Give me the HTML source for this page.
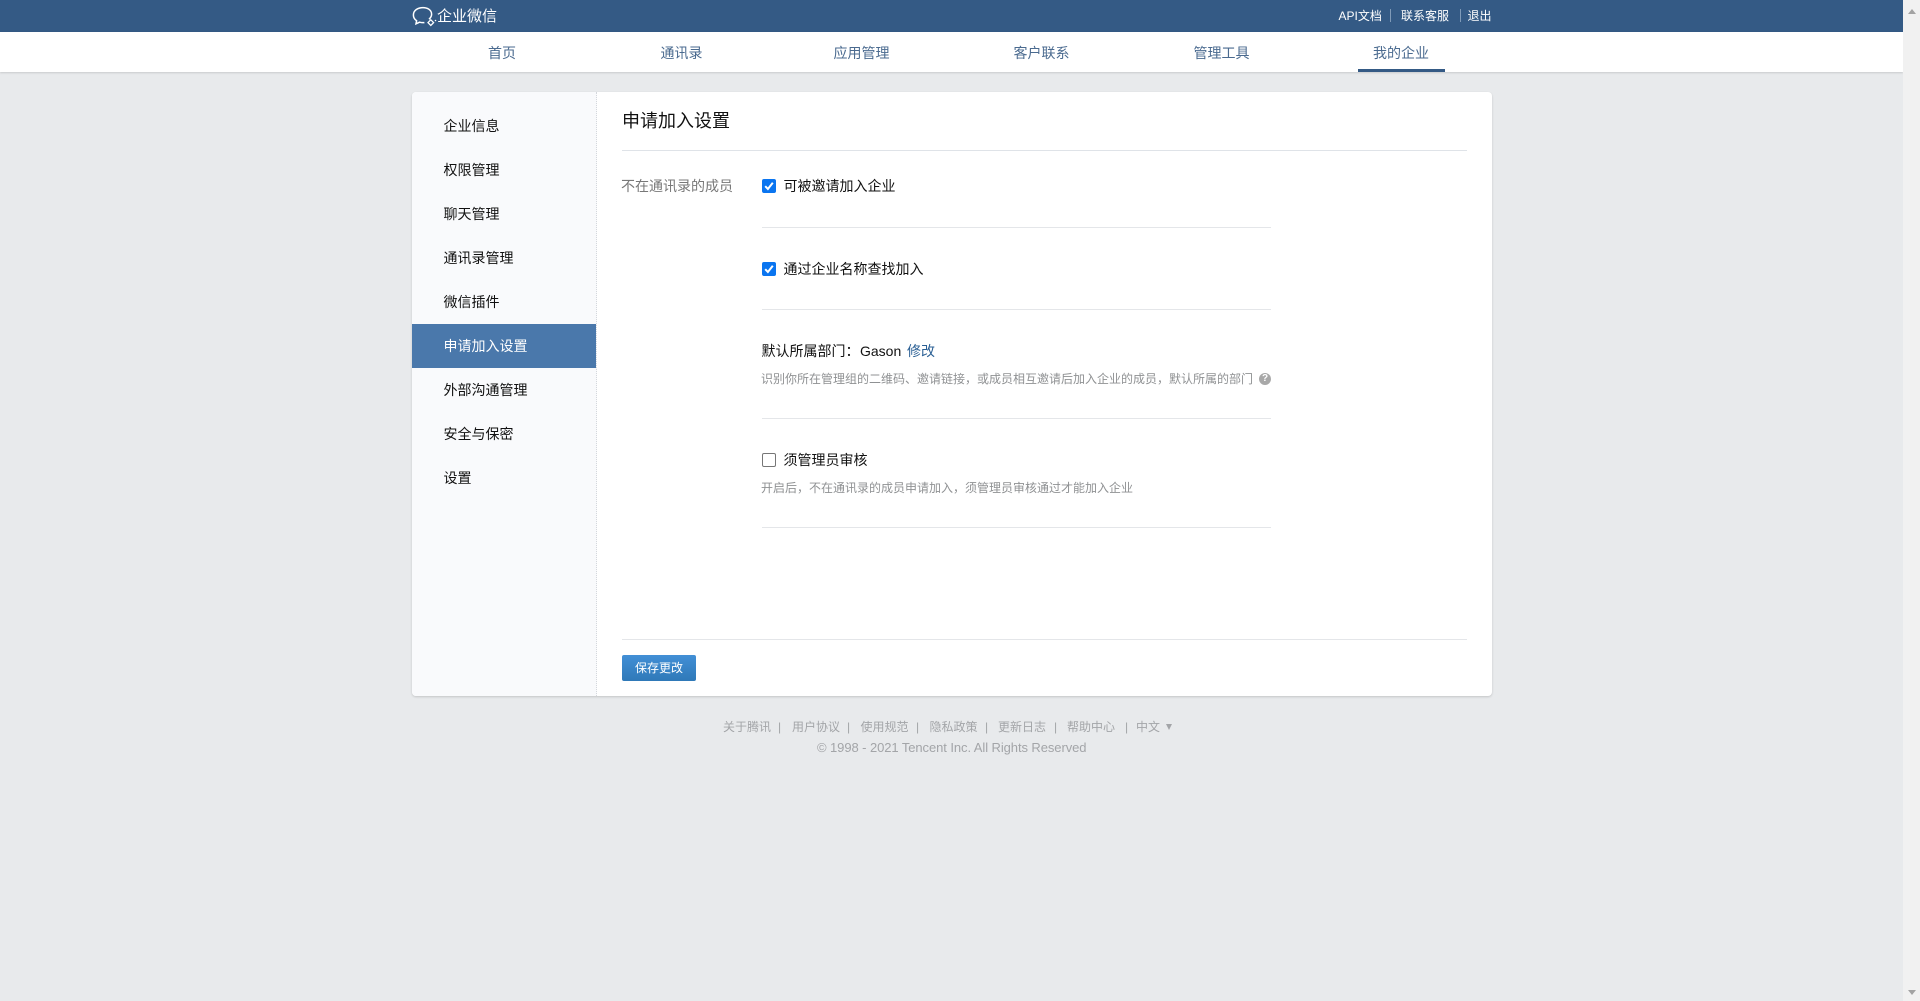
<!DOCTYPE html>
<html lang="zh-CN">
<head>
<meta charset="utf-8">
<title>申请加入设置</title>
<style>
html,body{margin:0;padding:0;width:1920px;height:1001px;overflow:hidden;background:#e8eaec;font-family:"Liberation Sans","Noto Sans CJK SC",sans-serif;color:#000}
*{box-sizing:border-box}
.a{position:absolute;white-space:nowrap;line-height:20px;height:20px}
.b{position:absolute}
.nav{width:180px;text-align:center;font-size:14px;color:#4a6a8f;top:42.5px}
.side{left:443.5px;font-size:14px;color:#111}
.line{position:absolute;left:762px;width:509px;height:1px;background:#e4e6e9}
.ck{position:absolute;left:762px;width:14px;height:14px;border-radius:2px;background:#0a75f0}
.ft{font-size:12px;color:#a3a5a8;top:717px}
.tp{font-size:12px;color:#fff;top:6px}
.sp{position:absolute;top:9px;width:1px;height:13px;background:#7f9ab8}
</style>
</head>
<body>
<div class="b" style="left:0;top:0;width:1903px;height:32px;background:#345a85"></div>
<svg class="b" style="left:410px;top:5px" width="28" height="22" viewBox="0 0 28 22" fill="none" stroke="#fff" stroke-width="1.5"><path d="M19 14.2C20.6 12.8 21.6 11 21.6 9.2C21.6 5 17.5 2.6 13 2.6C8 2.6 3.4 5.2 3.4 10C3.4 12.6 4.6 14.4 6.6 15.7L6 18.8L9.6 17.2C11 17.6 12.6 17.8 14.4 17.6"/><path d="M20.8 14.8L23.6 17.6L20.8 20.4L18 17.6Z" stroke-width="1.3"/><circle cx="25.5" cy="15.5" r=".8" fill="#fff" stroke="none"/></svg>
<div class="a" style="left:437px;top:7px;font-size:15px;color:#fff">企业微信</div>
<div class="a tp" style="left:1338.5px">API文档</div><div class="sp" style="left:1390px"></div>
<div class="a tp" style="left:1401px">联系客服</div><div class="sp" style="left:1460px"></div>
<div class="a tp" style="left:1467.5px">退出</div>

<div class="b" style="left:0;top:32px;width:1903px;height:40px;background:#fff;box-shadow:0 1px 2px rgba(0,0,0,.14)"></div>
<div class="a nav" style="left:412px">首页</div>
<div class="a nav" style="left:591.5px">通讯录</div>
<div class="a nav" style="left:771.5px">应用管理</div>
<div class="a nav" style="left:951.5px">客户联系</div>
<div class="a nav" style="left:1131.5px">管理工具</div>
<div class="a nav" style="left:1311px">我的企业</div>
<div class="b" style="left:1358px;top:69px;width:87px;height:3px;background:#345a85"></div>

<div class="b" style="left:412px;top:92px;width:1080px;height:604px;background:#fff;border-radius:4px;box-shadow:0 1px 2px rgba(0,0,0,.16)"></div>
<div class="b" style="left:412px;top:92px;width:185px;height:604px;background:#f9fafc;border-right:1px dotted #d4d7dc;border-radius:4px 0 0 4px"></div>
<div class="b" style="left:412px;top:324px;width:184px;height:44px;background:#4a78ab"></div>
<div class="a side" style="top:116px">企业信息</div>
<div class="a side" style="top:160px">权限管理</div>
<div class="a side" style="top:204px">聊天管理</div>
<div class="a side" style="top:248px">通讯录管理</div>
<div class="a side" style="top:292px">微信插件</div>
<div class="a side" style="top:336px;color:#fff">申请加入设置</div>
<div class="a side" style="top:380px">外部沟通管理</div>
<div class="a side" style="top:424px">安全与保密</div>
<div class="a side" style="top:468px">设置</div>

<div class="a" style="left:622px;top:111px;font-size:18px;color:#111">申请加入设置</div>
<div class="b" style="left:622px;top:150px;width:845px;height:1px;background:#dfe3e8"></div>

<div class="a" style="left:621px;top:176px;font-size:14px;color:#787878">不在通讯录的成员</div>
<div class="ck" style="top:179px"></div>
<svg class="b" style="left:762px;top:179px" width="14" height="14" viewBox="0 0 14 14" fill="none"><path d="M3.2 7.2L5.9 10L10.8 3.8" stroke="#fff" stroke-width="2"/></svg>
<div class="a" style="left:783.5px;top:176px;font-size:14px;color:#111">可被邀请加入企业</div>
<div class="line" style="top:227px"></div>

<div class="ck" style="top:262px"></div>
<svg class="b" style="left:762px;top:262px" width="14" height="14" viewBox="0 0 14 14" fill="none"><path d="M3.2 7.2L5.9 10L10.8 3.8" stroke="#fff" stroke-width="2"/></svg>
<div class="a" style="left:783.5px;top:259px;font-size:14px;color:#111">通过企业名称查找加入</div>
<div class="line" style="top:309px"></div>

<div class="a" style="left:761.5px;top:341px;font-size:14px;color:#111">默认所属部门&#xFF1A;</div>
<div class="a" style="left:860px;top:341px;font-size:14px;color:#111">Gason</div>
<div class="a" style="left:907px;top:341px;font-size:14px;color:#2a5f94">修改</div>
<div class="a" style="left:761px;top:369px;font-size:12px;color:#8f9193">识别你所在管理组的二维码、邀请链接&#xFF0C;或成员相互邀请后加入企业的成员&#xFF0C;默认所属的部门</div>
<div class="b" style="left:1259px;top:373px;width:12px;height:12px;border-radius:50%;background:#a8a8a8;color:#fff;font-size:10px;font-weight:bold;line-height:12px;text-align:center">?</div>
<div class="line" style="top:418px"></div>

<div class="b" style="left:762px;top:453px;width:14px;height:14px;border-radius:2px;border:1px solid #767676;background:#fff"></div>
<div class="a" style="left:783.5px;top:450px;font-size:14px;color:#111">须管理员审核</div>
<div class="a" style="left:761px;top:478px;font-size:12px;color:#8f9193">开启后&#xFF0C;不在通讯录的成员申请加入&#xFF0C;须管理员审核通过才能加入企业</div>
<div class="line" style="top:527px"></div>

<div class="b" style="left:622px;top:639px;width:845px;height:1px;background:#e4e6e9"></div>
<div class="b" style="left:622px;top:655px;width:74px;height:26px;border-radius:2px;background:linear-gradient(#428fd6,#2f79b8);color:#fff;font-size:12px;line-height:26px;text-align:center">保存更改</div>

<div class="a ft" style="left:723px">关于腾讯</div><div class="a ft" style="left:778px">|</div>
<div class="a ft" style="left:792px">用户协议</div><div class="a ft" style="left:847px">|</div>
<div class="a ft" style="left:860.5px">使用规范</div><div class="a ft" style="left:916px">|</div>
<div class="a ft" style="left:929.5px">隐私政策</div><div class="a ft" style="left:985px">|</div>
<div class="a ft" style="left:998px">更新日志</div><div class="a ft" style="left:1054px">|</div>
<div class="a ft" style="left:1067px">帮助中心</div><div class="a ft" style="left:1125px">|</div>
<div class="a ft" style="left:1136px">中文</div>
<div class="b" style="left:1166px;top:724px;width:0;height:0;border-left:3px solid transparent;border-right:3px solid transparent;border-top:6px solid #a3a5a8"></div>
<div class="a" style="left:817px;top:738px;font-size:13px;color:#a3a5a8;letter-spacing:-.08px">© 1998 - 2021 Tencent Inc. All Rights Reserved</div>

<div class="b" style="left:1903px;top:0;width:17px;height:1001px;background:#f1f1f1"></div>
<div class="b" style="left:1908px;top:9px;width:0;height:0;border-left:4px solid transparent;border-right:4px solid transparent;border-bottom:5px solid #a3a3a3"></div>
<div class="b" style="left:1908px;top:990px;width:0;height:0;border-left:4px solid transparent;border-right:4px solid transparent;border-top:5px solid #a3a3a3"></div>
</body>
</html>
